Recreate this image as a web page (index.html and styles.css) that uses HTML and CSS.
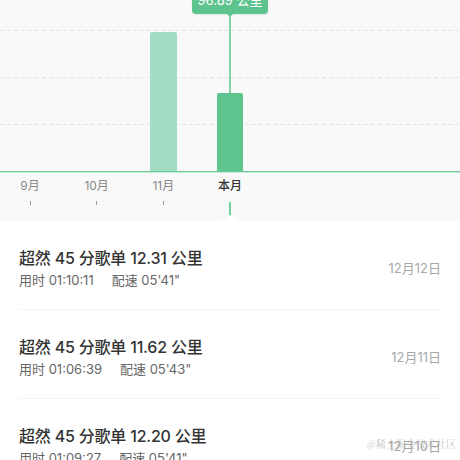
FILE: index.html
```html
<!DOCTYPE html>
<html lang="zh-CN">
<head>
<meta charset="utf-8" />
<title>跑步记录</title>
<link rel="stylesheet" href="styles.css">
</head>
<body>
<div class="chart">
	<svg class="plot" width="460" height="173" viewBox="0 0 460 173">
		<line class="grid" x1="0" y1="30.5" x2="460" y2="30.5" />
		<line class="grid" x1="0" y1="77.5" x2="460" y2="77.5" />
		<line class="grid" x1="0" y1="124.5" x2="460" y2="124.5" />
		<path class="bar_old" d="M150 172V34a2 2 0 0 1 2-2h23a2 2 0 0 1 2 2v138z" />
		<path class="bar_cur" d="M217 172V95a2 2 0 0 1 2-2h22a2 2 0 0 1 2 2v77z" />
		<line class="pointer" x1="230" y1="14" x2="230" y2="93" />
		<line class="base" x1="0" y1="171.5" x2="460" y2="171.5" />
		<line class="base_shadow" x1="0" y1="172.5" x2="460" y2="172.5" />
	</svg>
	<div class="tip">96.89 公里</div>
	<ul class="axis">
		<li><span>9月</span><i></i></li>
		<li><span>10月</span><i></i></li>
		<li><span>11月</span><i></i></li>
		<li class="active"><span>本月</span><i></i></li>
		<li><span></span></li>
		<li><span></span></li>
		<li><span></span></li>
	</ul>
</div>
<ul class="list">
	<li>
		<div class="info">
			<h3>超然 45 分歌单 12.31 公里</h3>
			<p><span>用时 01:10:11</span><span>配速 05'41"</span></p>
		</div>
		<em>12月12日</em>
	</li>
	<li>
		<div class="info">
			<h3>超然 45 分歌单 11.62 公里</h3>
			<p><span>用时 01:06:39</span><span>配速 05'43"</span></p>
		</div>
		<em>12月11日</em>
	</li>
	<li>
		<div class="info">
			<h3>超然 45 分歌单 12.20 公里</h3>
			<p><span>用时 01:09:27</span><span>配速 05'41"</span></p>
		</div>
		<em>12月10日</em>
	</li>
</ul>
<div class="mark">@稀土掘金技术社区</div>
</body>
</html>
```

FILE: styles.css
```css
*{ margin:0; padding:0;}
li{ list-style:none;}
html,body{ width:460px; height:460px; overflow:hidden;}
body{ background:#fff; font-family:Inter,"Noto Sans CJK SC",sans-serif; color:#333; position:relative;}

/* 图表 */
.chart{ position:relative; height:221px; background:#f9f9f9; overflow:hidden;}
.chart::after{ content:''; position:absolute; left:222px; bottom:0; border:8px solid transparent; border-bottom:6px solid #fff; border-top:0;}
.plot{ display:block;}
.grid{ stroke:#e4e4e4; stroke-width:1; stroke-dasharray:4 3;}
.bar_old{ fill:#a1dec3;}
.bar_cur{ fill:#5ec48e;}
.pointer{ stroke:#5ec48e; stroke-width:1.5;}
.base{ stroke:#6cc898; stroke-width:1;}
.base_shadow{ stroke:#c6ebd7; stroke-width:1;}

.tip{ position:absolute; left:192px; top:-14px; width:76px; height:28px; line-height:28px; border-radius:4px; background:#5ec48e; color:#fff; font-size:13px; text-align:center; box-shadow:0 1px 2px rgba(0,0,0,.08);}
.tip::after{ content:''; position:absolute; left:35px; bottom:-3px; border:3px solid transparent; border-top:3px solid #5ec48e; border-bottom:0;}

.axis{ display:flex; margin-left:-3.33px; margin-top:4px;}
.axis li{ flex:none; width:66.67px; display:flex; flex-direction:column; align-items:center;}
.axis span{ display:block; height:18px; line-height:18px; font-size:12px; color:#888;}
.axis i{ display:block; width:1px; height:4px; margin-top:6px; background:#9a9a9a;}
.axis .active span{ color:#333; font-weight:500;}
.axis .active i{ width:2px; height:14px; margin-top:7px; background:#6fcf9f;}

/* 列表 */
.list{ padding:0 19px;}
.list li{ display:flex; align-items:center; justify-content:space-between; height:83px; padding-top:5px; box-sizing:content-box; border-bottom:1px solid #f2f2f2;}
.list h3{ font-size:16px; line-height:22px; font-weight:500; color:#333; letter-spacing:-0.2px;}
.list p{ margin-top:2px; font-size:13px; line-height:18px; color:#666;}
.list p span{ margin-right:18px;}
.list em{ font-style:normal; font-size:13px; color:#a8a8a8;}

.mark{ position:absolute; right:4px; top:436px; font-size:10px; line-height:16px; color:rgba(150,150,150,.6); font-family:"Noto Serif CJK SC","Noto Sans CJK SC",serif;}
```
